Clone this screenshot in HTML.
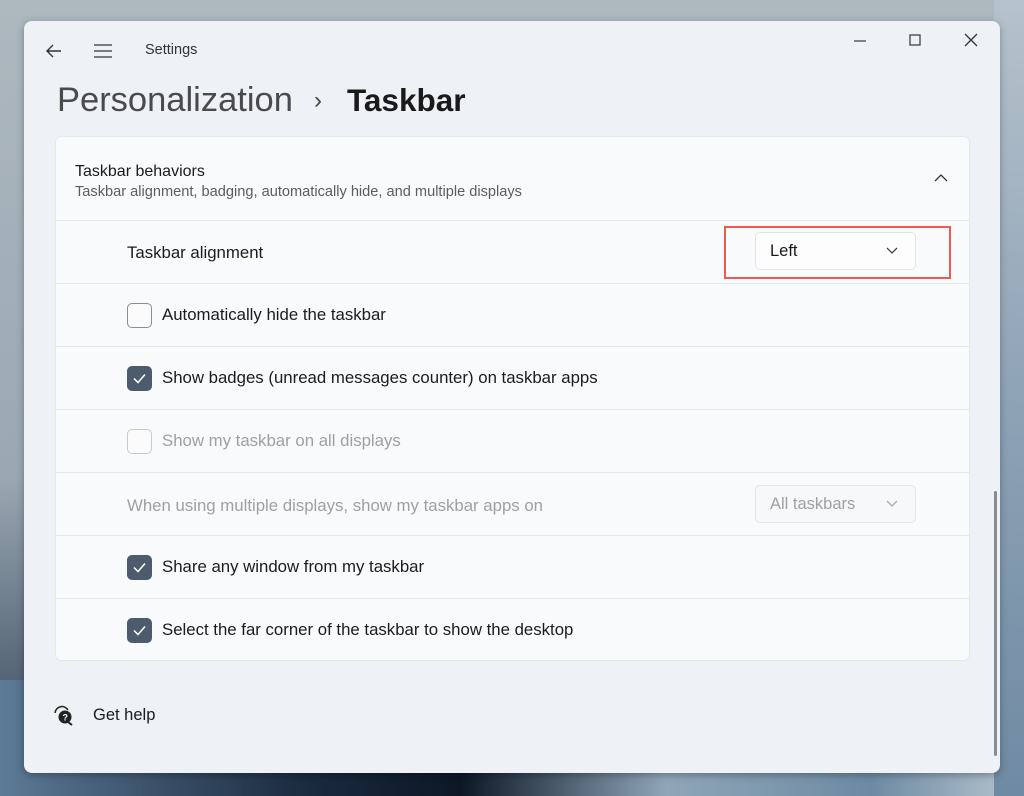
<!DOCTYPE html>
<html><head><style>
*{box-sizing:border-box;margin:0;padding:0}
body{width:1024px;height:796px;overflow:hidden;font-family:"Liberation Sans",sans-serif;background:linear-gradient(180deg,#aeb8bf 0%,#9aa8b3 60%,#2c3e52 100%);position:relative}
.bg2{position:absolute;left:0;top:680px;width:1024px;height:116px;background:linear-gradient(90deg,#5d7a96 0%,#1a2a3f 30%,#0d1726 45%,#8fa6b8 65%,#6d8aa3 85%,#b8c6d0 100%)}
.bgr{position:absolute;right:0;top:0;width:30px;height:796px;background:linear-gradient(180deg,#b6c2cc,#8ea3b6 50%,#6f8aa3)}
.win{position:absolute;left:24px;top:21px;width:976px;height:752px;background:#eef2f6;border-radius:8px;box-shadow:0 2px 8px rgba(0,0,0,.3)}
.t{position:absolute;color:#1b1b1b;white-space:nowrap}
.card{position:absolute;left:31px;top:115px;width:915px;height:525px;background:#f9fafb;border-radius:6px;border:1px solid #e6e9ec}
.row{position:absolute;left:0;width:913px;border-top:1px solid #e4e7ea}
.cb{position:absolute;left:71px;width:25px;height:25px;border-radius:5px}
.on{background:#4c5c6c}
.off{border:1.5px solid #8a8e92;background:#fbfbfb}
.dis{border:1.5px solid #c8cbce;background:#fbfbfb}
.lbl{position:absolute;left:106px;font-size:16.8px;color:#1c1c1c;white-space:nowrap}
.dd{position:absolute;left:699px;width:161px;height:38px;border-radius:5px;border:1px solid #e3e5e8;background:#fdfdfd}
</style></head><body>
<div class="bg2"></div><div class="bgr"></div>
<div class="win">
 <svg style="position:absolute;left:20px;top:21px" width="20" height="18"><path d="M17 9H3M9 3L3 9l6 6" stroke="#333" stroke-width="1.4" fill="none"/></svg>
 <svg style="position:absolute;left:69px;top:22px" width="20" height="16"><path d="M1 2h18M1 8h18M1 14h18" stroke="#333" stroke-width="1.3"/></svg>
 <div class="t" style="left:121px;top:21px;font-size:14.5px;color:#333">Settings</div>
 <svg style="position:absolute;left:828px;top:10px" width="140" height="20"><path d="M2 10h12" stroke="#333" stroke-width="1.2"/><rect x="58" y="4" width="10" height="10" fill="none" stroke="#333" stroke-width="1.2"/><path d="M113 3l12 12M125 3l-12 12" stroke="#333" stroke-width="1.3"/></svg>
 <div class="t" style="left:33px;top:60px;font-size:34.5px;color:#4a4a4a">Personalization</div>
 <div class="t" style="left:290px;top:66px;font-size:24px;color:#444">›</div>
 <div class="t" style="left:323px;top:61px;font-size:31.5px;font-weight:bold;color:#1a1a1a">Taskbar</div>
 <div class="card">
  <div class="t" style="left:19px;top:26px;font-size:16px">Taskbar behaviors</div>
  <div class="t" style="left:19px;top:47px;font-size:14.6px;color:#5c5c5c">Taskbar alignment, badging, automatically hide, and multiple displays</div>
  <svg style="position:absolute;left:877px;top:35px" width="16" height="12"><path d="M2 9l6-6 6 6" stroke="#333" stroke-width="1.3" fill="none"/></svg>
  <div class="row" style="top:83px;height:63px">
   <div class="lbl" style="left:71px;top:22px">Taskbar alignment</div>
   <div class="dd" style="top:11px"><div class="t" style="left:14px;top:9px;font-size:16.5px">Left</div><svg style="position:absolute;left:130px;top:14px" width="12" height="8"><path d="M1 1l5 5 5-5" stroke="#444" stroke-width="1.3" fill="none"/></svg></div>
   <div style="position:absolute;left:668px;top:5px;width:227px;height:53px;border:2px solid #ef5a4f"></div>
  </div>
  <div class="row" style="top:146px;height:63px"><div class="cb off" style="top:19px"></div><div class="lbl" style="top:21px">Automatically hide the taskbar</div></div>
  <div class="row" style="top:209px;height:63px"><div class="cb on" style="top:19px"><svg width="25" height="25"><path d="M7 12.5l4 4 7-8" stroke="#fff" stroke-width="1.5" fill="none"/></svg></div><div class="lbl" style="top:21px">Show badges (unread messages counter) on taskbar apps</div></div>
  <div class="row" style="top:272px;height:63px"><div class="cb dis" style="top:19px"></div><div class="lbl" style="top:21px;color:#a0a0a0">Show my taskbar on all displays</div></div>
  <div class="row" style="top:335px;height:63px">
   <div class="lbl" style="left:71px;top:23px;color:#a0a0a0">When using multiple displays, show my taskbar apps on</div>
   <div class="dd" style="top:12px;background:#f7f8f9"><div class="t" style="left:14px;top:9px;font-size:16.5px;color:#a0a0a0">All taskbars</div><svg style="position:absolute;left:130px;top:14px" width="12" height="8"><path d="M1 1l5 5 5-5" stroke="#aaa" stroke-width="1.3" fill="none"/></svg></div>
  </div>
  <div class="row" style="top:398px;height:63px"><div class="cb on" style="top:19px"><svg width="25" height="25"><path d="M7 12.5l4 4 7-8" stroke="#fff" stroke-width="1.5" fill="none"/></svg></div><div class="lbl" style="top:21px">Share any window from my taskbar</div></div>
  <div class="row" style="top:461px;height:63px"><div class="cb on" style="top:19px"><svg width="25" height="25"><path d="M7 12.5l4 4 7-8" stroke="#fff" stroke-width="1.5" fill="none"/></svg></div><div class="lbl" style="top:21px">Select the far corner of the taskbar to show the desktop</div></div>
 </div>
 <svg style="position:absolute;left:28px;top:683px" width="24" height="22"><path d="M3 9a7 7 0 0 1 13-3" stroke="#222" stroke-width="1.5" fill="none"/><circle cx="13" cy="13" r="6.5" fill="#222"/><path d="M16 18l4 3" stroke="#222" stroke-width="2"/><text x="10.5" y="16.5" font-size="9" fill="#fff" font-family="Liberation Sans" font-weight="bold">?</text></svg>
 <div class="t" style="left:69px;top:685px;font-size:16.5px">Get help</div>
 <div style="position:absolute;left:970px;top:470px;width:3px;height:265px;border-radius:2px;background:#8a8d90"></div>
</div>
</body></html>
